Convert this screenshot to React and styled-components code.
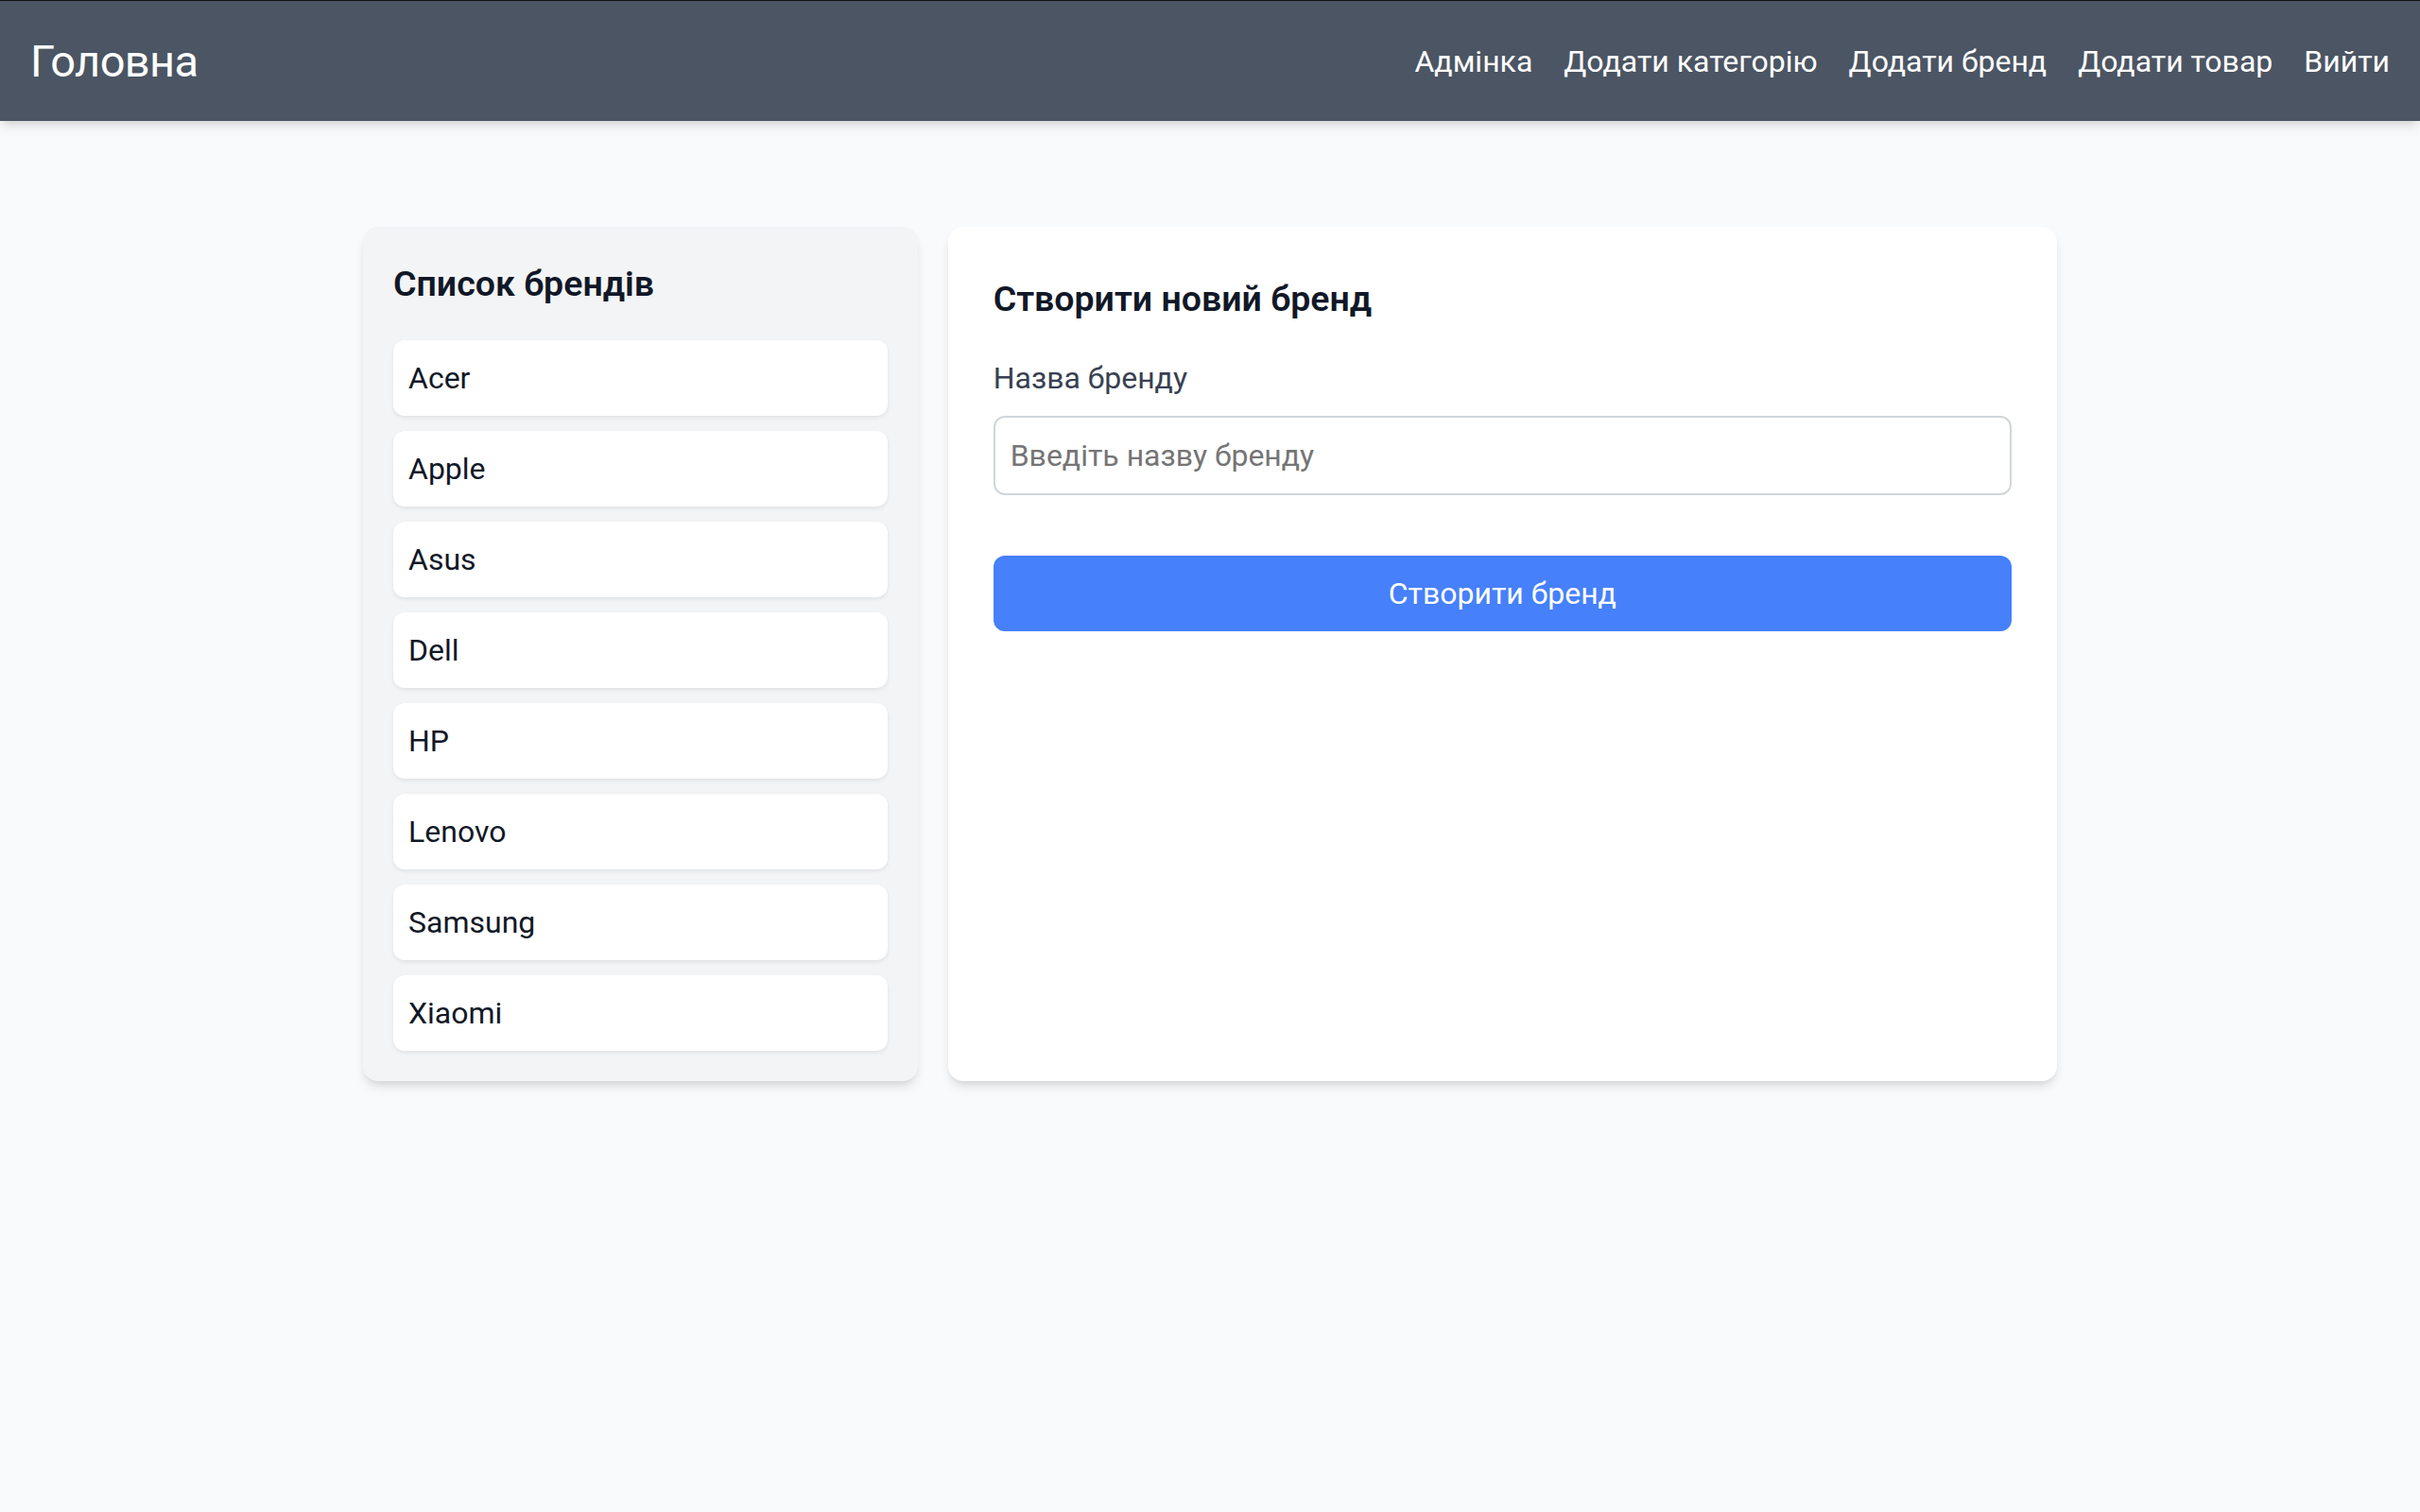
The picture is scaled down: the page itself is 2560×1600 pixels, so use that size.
import React, { useState } from 'react';
import styled, { createGlobalStyle } from 'styled-components';

const GlobalStyle = createGlobalStyle`
    * {
        box-sizing: border-box;
    }
    body {
        margin: 0;
        background: #f9fafb;
        font-family: Roboto, "Noto Sans", sans-serif;
        color: #111827;
    }
`;

const Page = styled.div`
    min-height: 1600px;
    background: #f9fafb;
`;

const NavBar = styled.nav`
    height: 128px;
    display: flex;
    align-items: center;
    justify-content: space-between;
    padding: 0 32px;
    background: #4b5563;
    border-top: 1px solid #111;
    box-shadow: 0 8px 12px -2px rgba(0, 0, 0, 0.1), 0 4px 8px -4px rgba(0, 0, 0, 0.1);
`;

const Brand = styled.a`
    font-size: 47px;
    line-height: 64px;
    letter-spacing: -0.6px;
    color: #ffffff;
    text-decoration: none;
`;

const NavLinks = styled.div`
    display: flex;
    gap: 33px;
`;

const NavLink = styled.a`
    font-size: 32px;
    line-height: 48px;
    color: #ffffff;
    text-decoration: none;
    cursor: pointer;
`;

const Main = styled.main`
    max-width: 1792px;
    margin: 112px auto 0;
    display: grid;
    grid-template-columns: 1fr 2fr;
    gap: 32px;
`;

const BrandsPanel = styled.section`
    background: #f3f4f6;
    border-radius: 16px;
    padding: 32px;
    box-shadow: 0 8px 12px -2px rgba(0, 0, 0, 0.1), 0 4px 8px -4px rgba(0, 0, 0, 0.1);
`;

const FormPanel = styled.section`
    background: #ffffff;
    border-radius: 16px;
    padding: 48px;
    box-shadow: 0 8px 12px -2px rgba(0, 0, 0, 0.1), 0 4px 8px -4px rgba(0, 0, 0, 0.1);
`;

const PanelTitle = styled.h2`
    margin: 0 0 32px;
    font-size: 37.5px;
    line-height: 56px;
    font-weight: 600;
    color: #111827;
`;

const BrandList = styled.ul`
    list-style: none;
    margin: 0;
    padding: 0;
    display: flex;
    flex-direction: column;
    gap: 16px;
`;

const BrandItem = styled.li`
    background: #ffffff;
    border-radius: 12px;
    padding: 16px;
    font-size: 32px;
    line-height: 48px;
    color: #111827;
    box-shadow: 0 2px 4px rgba(0, 0, 0, 0.08);
`;

const Field = styled.div`
    margin-bottom: 64px;
`;

const Label = styled.label`
    display: block;
    margin-bottom: 16px;
    font-size: 32px;
    line-height: 48px;
    color: #374151;
`;

const TextInput = styled.input`
    width: 100%;
    height: 84px;
    padding: 0 16px;
    font-family: inherit;
    font-size: 32px;
    color: #111827;
    background: #ffffff;
    border: 2px solid #d1d5db;
    border-radius: 12px;
    outline: none;
    ::placeholder {
        color: #8b8b93;
    }
`;

const SubmitButton = styled.button`
    width: 100%;
    height: 80px;
    border: none;
    border-radius: 12px;
    background: #4680fa;
    color: #ffffff;
    font-family: inherit;
    font-size: 32px;
    cursor: pointer;
`;

const brands = ['Acer', 'Apple', 'Asus', 'Dell', 'HP', 'Lenovo', 'Samsung', 'Xiaomi'];

const App = () => {
    const [brandName, setBrandName] = useState('');

    return (
        <Page>
            <GlobalStyle />
            <NavBar>
                <Brand href="#">Головна</Brand>
                <NavLinks>
                    <NavLink>Адмінка</NavLink>
                    <NavLink>Додати категорію</NavLink>
                    <NavLink>Додати бренд</NavLink>
                    <NavLink>Додати товар</NavLink>
                    <NavLink>Вийти</NavLink>
                </NavLinks>
            </NavBar>
            <Main>
                <BrandsPanel>
                    <PanelTitle>Список брендів</PanelTitle>
                    <BrandList>
                        {brands.map((brand) => (
                            <BrandItem key={brand}>{brand}</BrandItem>
                        ))}
                    </BrandList>
                </BrandsPanel>
                <FormPanel>
                    <PanelTitle>Створити новий бренд</PanelTitle>
                    <Field>
                        <Label htmlFor="brand-name">Назва бренду</Label>
                        <TextInput
                            id="brand-name"
                            placeholder="Введіть назву бренду"
                            value={brandName}
                            onChange={(event) => setBrandName(event.target.value)}
                        />
                    </Field>
                    <SubmitButton type="button">Створити бренд</SubmitButton>
                </FormPanel>
            </Main>
        </Page>
    );
};

export default App;
